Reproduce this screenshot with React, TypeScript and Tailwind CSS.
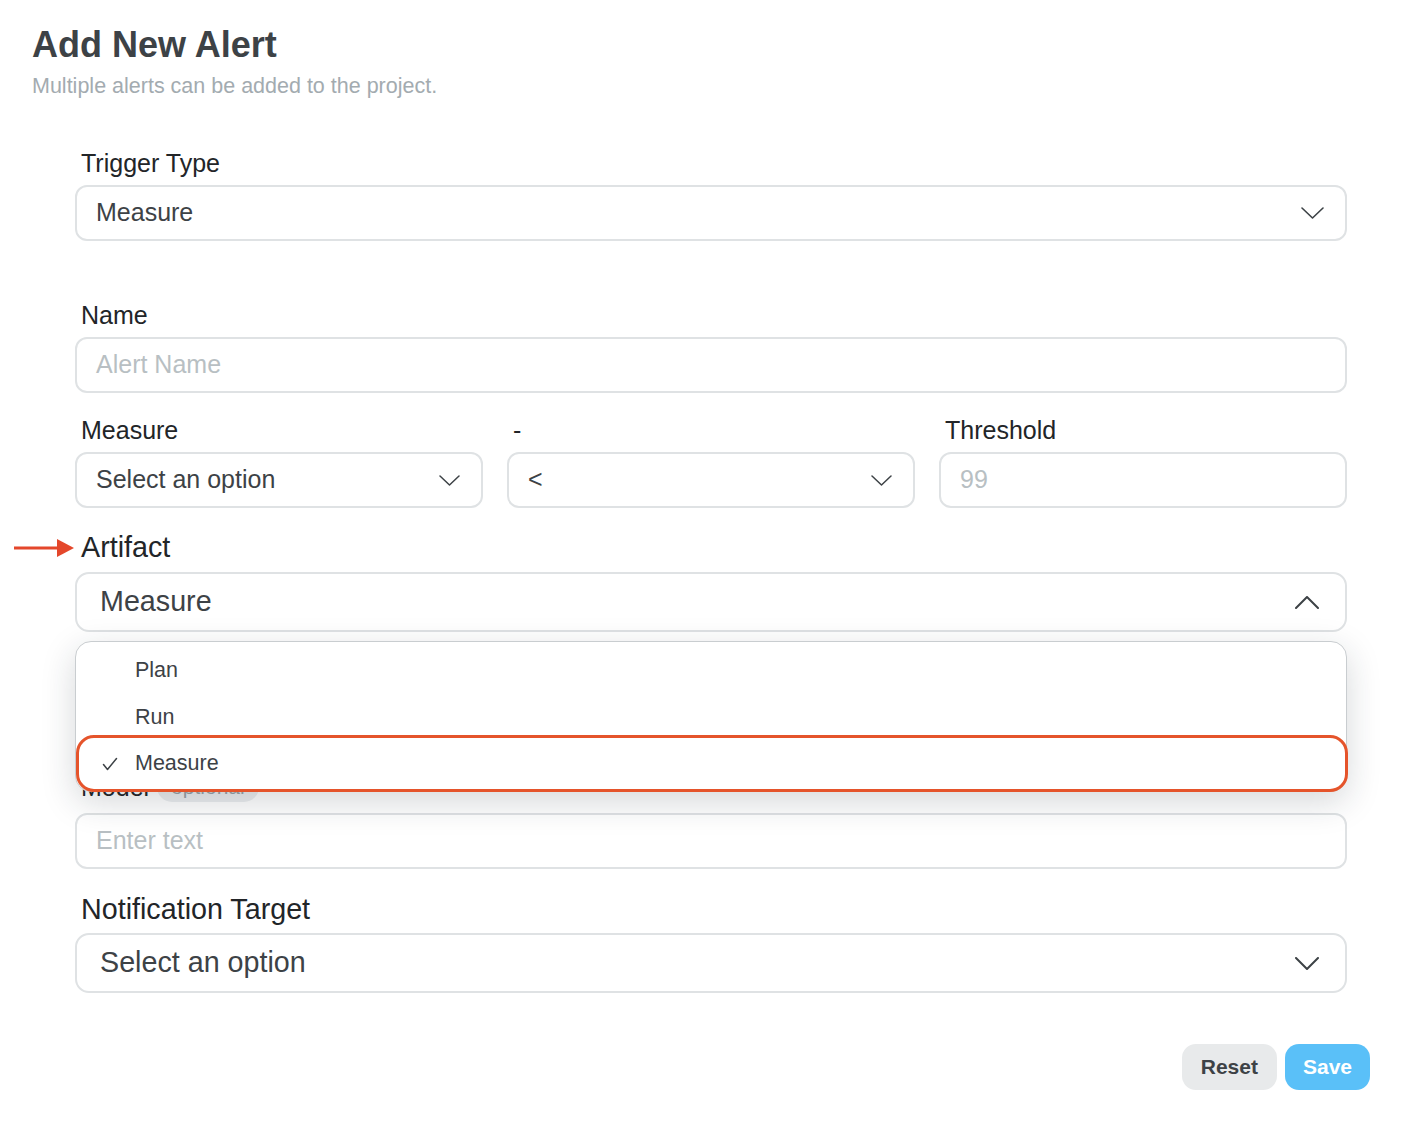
import React from "react";

const FONT = { fontFamily: '"Liberation Sans", Arial, Helvetica, sans-serif' };

function Chevron({ up = false, w = 22, h = 11, stroke = 1.6 }: { up?: boolean; w?: number; h?: number; stroke?: number }) {
  return (
    <svg width={w} height={h} viewBox={`0 0 ${w} ${h}`} fill="none" className="shrink-0">
      <path
        d={up ? `M1 ${h - 1} L${w / 2} 1 L${w - 1} ${h - 1}` : `M1 1 L${w / 2} ${h - 1} L${w - 1} 1`}
        stroke="#3d4246"
        strokeWidth={stroke}
        strokeLinecap="round"
        strokeLinejoin="round"
      />
    </svg>
  );
}

function Label({ children, big = false }: { children: React.ReactNode; big?: boolean }) {
  return (
    <div
      className={
        big
          ? "pl-[6px] text-[28.7px] leading-[36px] text-[#222528]"
          : "pl-[6px] text-[25px] leading-[32px] text-[#222528]"
      }
    >
      {children}
    </div>
  );
}

function SelectBox({
  value,
  big = false,
  up = false,
  small = false,
}: {
  value: string;
  big?: boolean;
  up?: boolean;
  small?: boolean;
}) {
  return (
    <div
      className={
        big
          ? "flex h-[60px] items-center justify-between rounded-[14px] border-2 border-[#dfe2e4] bg-white pl-[23px] pr-[26px]"
          : "flex h-[56px] items-center justify-between rounded-[12px] border-2 border-[#dfe2e4] bg-white pl-[19px] pr-[21px]"
      }
    >
      <span className={big ? "text-[28.7px] text-[#3d4246]" : "text-[25px] text-[#3d4246]"}>{value}</span>
      {big ? (
        <Chevron up={up} w={24} h={13} stroke={2} />
      ) : small ? (
        <Chevron w={21} h={11} stroke={1.5} />
      ) : (
        <Chevron w={23} h={12} stroke={1.6} />
      )}
    </div>
  );
}

function TextBox({ placeholder }: { placeholder: string }) {
  return (
    <div className="flex h-[56px] items-center rounded-[12px] border-2 border-[#dfe2e4] bg-white pl-[19px]">
      <span className="text-[25px] text-[#b8bfc3]">{placeholder}</span>
    </div>
  );
}

function CheckIcon() {
  return (
    <svg width="16" height="14" viewBox="0 0 16 14" fill="none">
      <path d="M1.5 7.5 L5.5 12.5 L14.5 1.5" stroke="#3d4246" strokeWidth="1.5" strokeLinecap="round" strokeLinejoin="round" />
    </svg>
  );
}

export default function App() {
  return (
    <div className="min-h-[1126px] w-full bg-white px-8 pt-[23px]" style={FONT}>
      <h1 className="text-[36px] font-bold leading-[44px] text-[#3d4246]">Add New Alert</h1>
      <p className="mt-[6px] text-[21.5px] leading-[26px] text-[#a3abb0]">
        Multiple alerts can be added to the project.
      </p>

      <div className="ml-[43px] mt-[48px] w-[1272px]">
        {/* Trigger type */}
        <Label>Trigger Type</Label>
        <div className="mt-[6px]">
          <SelectBox value="Measure" />
        </div>

        {/* Name */}
        <div className="mt-[58px]">
          <Label>Name</Label>
          <div className="mt-[6px]">
            <TextBox placeholder="Alert Name" />
          </div>
        </div>

        {/* Measure / operator / threshold */}
        <div className="mt-[21px] grid grid-cols-3 gap-6">
          <div>
            <Label>Measure</Label>
            <div className="mt-[6px]">
              <SelectBox value="Select an option" small />
            </div>
          </div>
          <div>
            <Label>-</Label>
            <div className="mt-[6px]">
              <SelectBox value="<" small />
            </div>
          </div>
          <div>
            <Label>Threshold</Label>
            <div className="mt-[6px]">
              <TextBox placeholder="99" />
            </div>
          </div>
        </div>

        {/* Artifact */}
        <div className="mt-[21px]">
          <div className="relative">
            <svg
              width="61"
              height="20"
              viewBox="0 0 61 20"
              className="absolute left-[-61px] top-[9px]"
            >
              <line x1="0" y1="10" x2="46" y2="10" stroke="#e4472b" strokeWidth="3" />
              <polygon points="43,1 60,10 43,19" fill="#e4472b" />
            </svg>
            <Label big>Artifact</Label>
          </div>
          <div className="relative mt-[7px]">
            <SelectBox value="Measure" big up />

            <div className="absolute left-0 right-0 top-[69px] z-10 h-[151px] rounded-[16px] border-[1.5px] border-[#c9cdd0] bg-white pt-[5px] shadow-[0_10px_34px_rgba(30,40,50,0.18)]">
              <div className="flex h-[47px] items-center pl-[59px] text-[21.5px] text-[#3d4246]">Plan</div>
              <div className="flex h-[47px] items-center pl-[59px] text-[21.5px] text-[#3d4246]">Run</div>
              <div className="absolute left-0 right-[-1.5px] top-[93px] flex h-[57px] items-center rounded-[18px] border-[3px] border-[#e5542b] bg-white pl-[23px] text-[21.5px] text-[#3d4246]">
                <CheckIcon />
                <span className="ml-[17px]">Measure</span>
              </div>
            </div>
          </div>
        </div>

        {/* Model (covered by dropdown) */}
        <div className="mt-[141px]">
          <div className="flex h-[28px] items-center gap-[8px] pl-[6px]">
            <span className="text-[25px] leading-[28px] text-[#222528]">Model</span>
            <span className="rounded-full bg-[#eceef0] px-[14px] py-[3px] text-[21px] leading-[24px] text-[#9aa2a7]">
              optional
            </span>
          </div>
          <div className="mt-[12px]">
            <TextBox placeholder="Enter text" />
          </div>
        </div>

        {/* Notification target */}
        <div className="mt-[22px]">
          <Label big>Notification Target</Label>
          <div className="mt-[6px]">
            <SelectBox value="Select an option" big />
          </div>
        </div>
      </div>

      <div className="mt-[51px] flex justify-end gap-2">
        <button
          type="button"
          className="h-[46px] rounded-[14px] bg-[#e8eaeb] px-[19px] text-[21px] font-bold text-[#3d4246]"
        >
          Reset
        </button>
        <button
          type="button"
          className="h-[46px] rounded-[14px] bg-[#5ac0f8] px-[18px] text-[21px] font-bold text-white"
        >
          Save
        </button>
      </div>
    </div>
  );
}
